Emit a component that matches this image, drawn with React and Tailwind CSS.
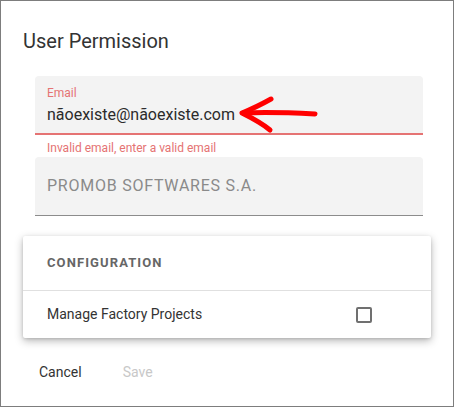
function RedArrow() {
  return (
    <svg
      className="absolute left-0 top-0 pointer-events-none"
      width="456"
      height="410"
      viewBox="0 0 456 410"
    >
      <path
        d="M315 114 C 295 113, 268 112, 243 113"
        fill="none"
        stroke="#ff0000"
        strokeWidth="5"
        strokeLinecap="round"
      />
      <path
        d="M271 99 C 262 104, 252 109, 242 113 C 252 118, 263 124, 270 130"
        fill="none"
        stroke="#ff0000"
        strokeWidth="5"
        strokeLinecap="round"
        strokeLinejoin="round"
      />
    </svg>
  );
}

export default function App() {
  return (
    <div className="relative w-[456px] h-[410px] bg-white font-['Roboto','Liberation_Sans',sans-serif]">
      <div className="w-[454px] h-[407px] border border-[#7d7d7d] pt-[28px] flex flex-col">
        <h1 className="pl-[22px] text-[20px] leading-[24px] text-[#333]">User Permission</h1>

        <div className="ml-[34px] w-[388px] mt-[23px]">
          <div className="h-[59px] bg-[#f3f3f3] rounded-t-[4px] border-b-2 border-[#e57373] px-[12px] pt-[10px]">
            <div className="text-[12px] leading-[14px] text-[#e57373]">Email</div>
            <div className="mt-[5px] text-[16px] leading-[19px] text-[#2b2b2b]">
              nãoexiste@nãoexiste.com
            </div>
          </div>
          <div className="mt-[6px] pl-[12px] text-[12px] leading-[14px] text-[#e57373]">
            Invalid email, enter a valid email
          </div>
          <div className="mt-[2px] h-[59px] bg-[#f3f3f3] rounded-t-[4px] border-b border-[#8c8c8c] px-[12px] pt-[19px]">
            <div className="text-[16px] leading-[19px] tracking-[0.75px] text-[#8a8a8a]">
              PROMOB SOFTWARES S.A.
            </div>
          </div>
        </div>

        <div className="ml-[22px] w-[408px] mt-[20px] bg-white rounded-[2px] shadow-[0_3px_8px_rgba(0,0,0,0.28),0_1px_3px_rgba(0,0,0,0.12)]">
          <div className="h-[55px] flex items-center pl-[24px] border-b border-[#e0e0e0]">
            <span className="text-[13px] font-bold tracking-[1.1px] text-[#666]">CONFIGURATION</span>
          </div>
          <div className="h-[47px] flex items-center justify-between pl-[24px] pr-[59px]">
            <span className="text-[14px] text-[#333]">Manage Factory Projects</span>
            <span className="w-[16px] h-[16px] border-2 border-[#707070] rounded-[2px]" />
          </div>
        </div>

        <div className="mt-[26px] flex items-center pl-[38px] gap-[41px] text-[14px] leading-[16px]">
          <span className="text-[#333]">Cancel</span>
          <span className="text-[#c8c8c8]">Save</span>
        </div>
      </div>
      <RedArrow />
    </div>
  );
}
